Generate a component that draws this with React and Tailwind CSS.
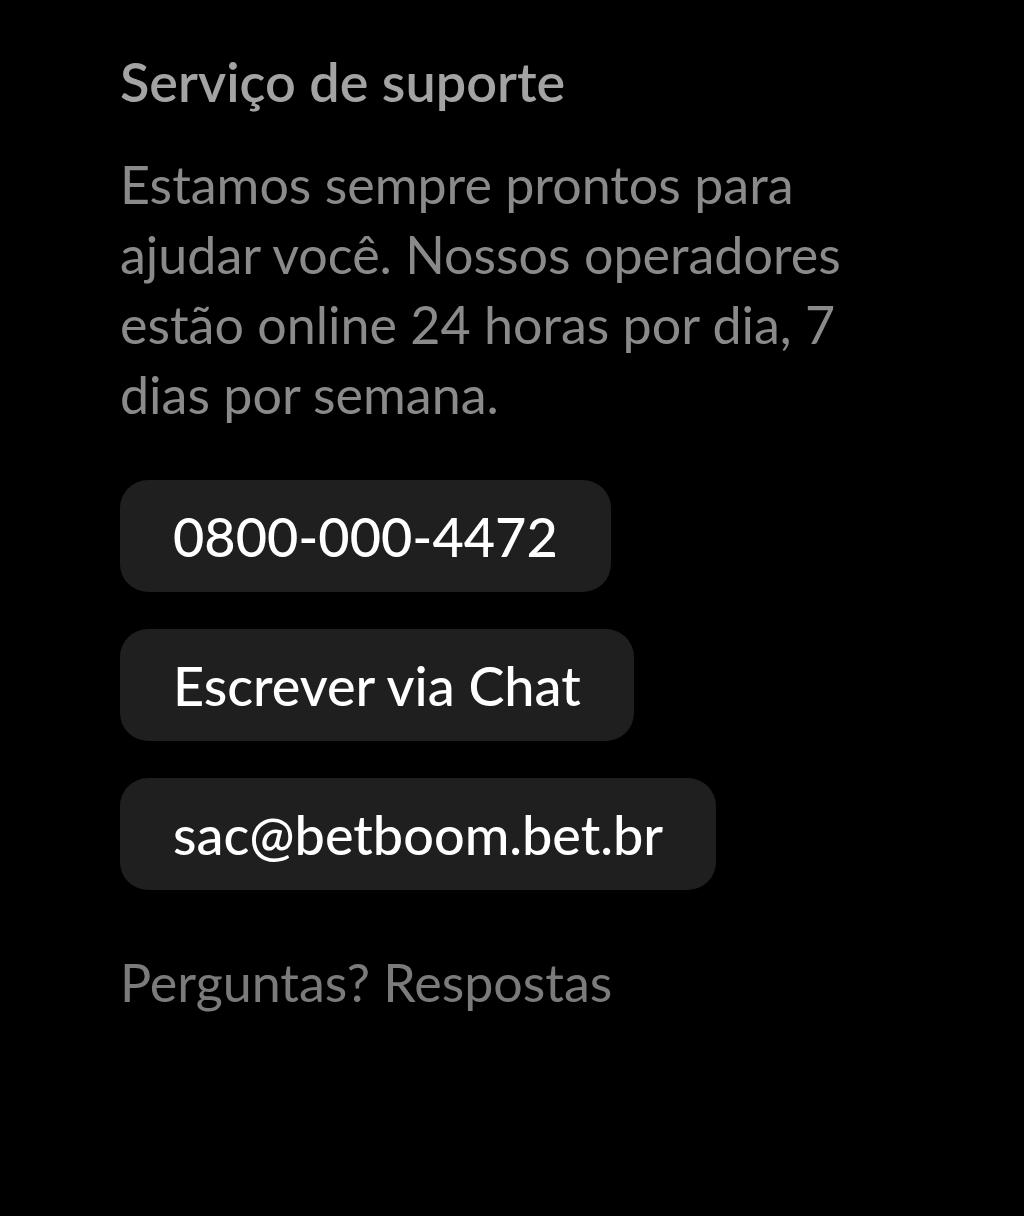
export default function App() {
  const links = ["0800-000-4472", "Escrever via Chat", "sac@betboom.bet.br"];

  return (
    <div className="min-h-[1216px] w-[1024px] bg-black font-['Lato','Noto_Sans',sans-serif]">
      <div className="pl-[120px] pt-[52px]">
        <h2 className="text-[54px] font-semibold leading-[60px] text-[#a3a3a3]">Serviço de suporte</h2>
        <p className="mt-[37px] w-[780px] text-[52px] leading-[70px] text-[#8a8a8a]">
          Estamos sempre prontos para ajudar você. Nossos operadores estão online 24 horas por dia, 7 dias por semana.
        </p>
        <div className="mt-[51px] flex flex-col items-start gap-[37px]">
          {links.map((t) => (
            <button
              key={t}
              className="h-[112px] rounded-[28px] bg-[#1f1f1f] px-[53px] text-[54px] font-medium text-white"
            >
              {t}
            </button>
          ))}
        </div>
        <p className="mt-[57px] text-[52px] leading-[70px] text-[#7b7b7b]">Perguntas? Respostas</p>
      </div>
    </div>
  );
}
